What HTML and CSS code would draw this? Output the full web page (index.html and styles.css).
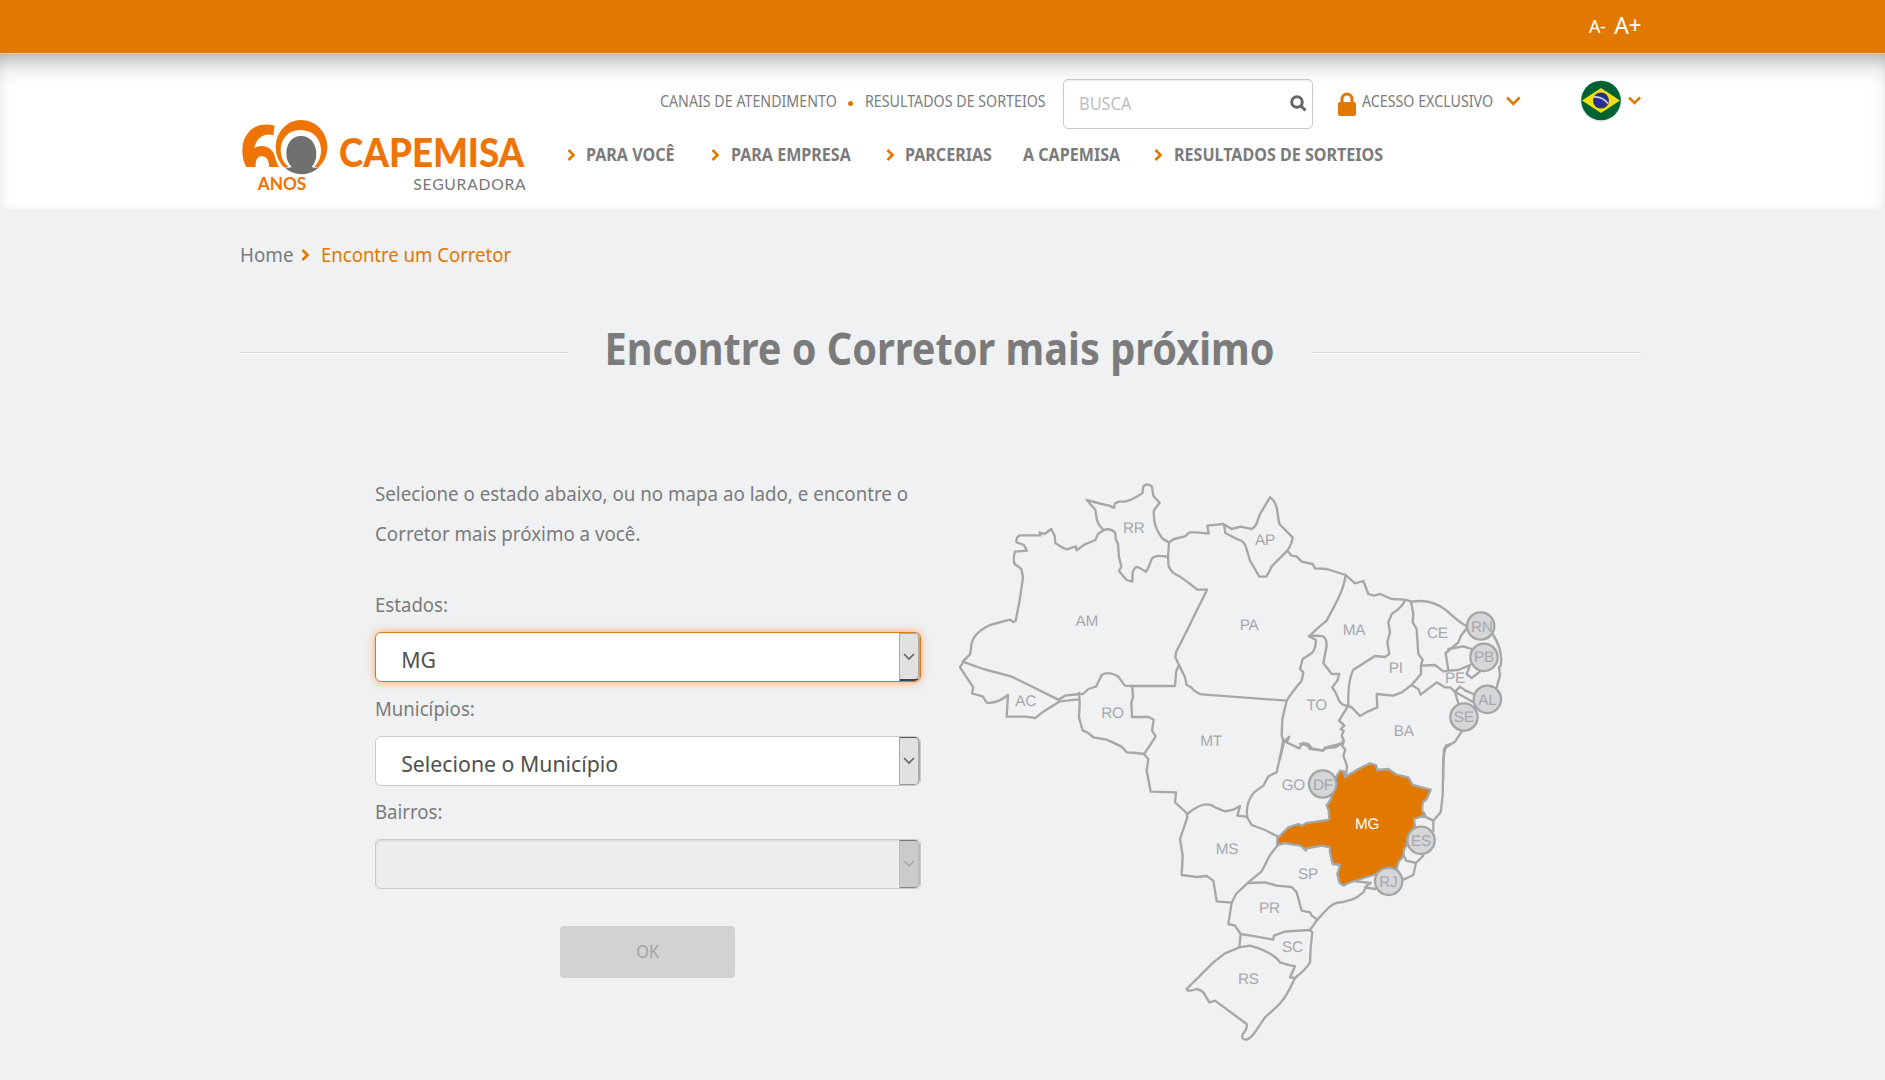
FILE: index.html
```html
<!DOCTYPE html>
<html lang="pt-BR">
<head>
<meta charset="utf-8">
<title>Encontre um Corretor</title>
<link rel="stylesheet" href="styles.css">
</head>
<body>
<div class="topbar"><div class="container font-size"><a class="small">A-</a><a class="large">A+</a></div></div>
<header class="header">
  <div class="container header-inner">
    <svg class="logo" viewBox="0 0 860 220" aria-label="Capemisa Seguradora 60 anos">
      <path class="o" d="M98 17 L94 46 Q73 39 58 50 Q41 60 37 84 Q55 73 77 82 Q96 91 101 119 L110 141 L82 141 Q80 108 59 108 Q40 109 40 141 L13 141 Q2 124 1 94 Q-1 57 25 31 Q53 6 98 17Z"/>
      <path class="o" d="M176 0 C218 0 256 33 256 82 Q256 118 230 141 L217 141 Q239 117 237 88 C235 52 210 31 177 30 C142 28 116 54 116 91 Q116 122 140 141 L124 141 Q101 115 101 82 C102 34 137 0 176 0Z"/>
      <path class="g" d="M177 48 C203 48 223 69 223 101 Q223 125 209 141 Q218 145 232 141 Q210 163 180 163 Q147 163 127 141 Q139 145 149 141 Q133 125 133 101 C133 69 151 48 177 48Z"/>
      <text class="brand" x="291" y="140" textLength="556" lengthAdjust="spacingAndGlyphs">CAPEMISA</text>
      <text class="years" x="47" y="210" textLength="146" lengthAdjust="spacingAndGlyphs">ANOS</text>
      <text class="seg" x="514" y="209" textLength="337" lengthAdjust="spacing">SEGURADORA</text>
    </svg>
    <div class="menus">
      <div class="utility">
        <a class="u1"><span>CANAIS DE ATENDIMENTO</span></a>
        <i class="dot"></i>
        <a class="u2"><span>RESULTADOS DE SORTEIOS</span></a>
        <div class="search"><span>BUSCA</span><svg width="17" height="17" viewBox="0 0 17 17"><circle cx="7" cy="7" r="5.3"/><path d="M11 11l4.5 4.5"/></svg></div>
        <svg class="lock" width="18" height="24" viewBox="0 0 18 24"><path d="M4 11V7a5 5 0 0 1 10 0v4" fill="none" stroke="#e17800" stroke-width="3"/><rect y="10" width="18" height="14" rx="2" fill="#e17800"/></svg>
        <a class="u3"><span>ACESSO EXCLUSIVO</span></a>
        <svg class="down" width="15" height="10" viewBox="0 0 15 10"><path d="M1 1.5l6.3 6.3 6.3-6.3"/></svg>
        <svg class="flag" width="42" height="42" viewBox="0 0 42 42"><circle cx="21" cy="21" r="20.8" fill="#e5efe9"/><circle cx="21" cy="20.5" r="19.8" fill="#006233"/><path d="M2 20.5L21 8l19 12.500L21 33z" fill="#f0df14"/><circle cx="21" cy="20.500" r="8" fill="#282e91"/><path d="M13.500 17q8-1 14.500 6.500" fill="none" stroke="#c9d2e6" stroke-width="1.600"/></svg>
        <svg class="down small-down" width="13" height="9" viewBox="0 0 13 9"><path d="M1 1.500l5.500 5.500 5.500-5.500"/></svg>
      </div>
      <nav class="nav">
        <svg class="chev" width="9" height="12" viewBox="0 0 9 12"><path d="M1.500 1l5 5-5 5"/></svg><a>PARA VOCÊ</a>
        <svg class="chev" width="9" height="12" viewBox="0 0 9 12"><path d="M1.500 1l5 5-5 5"/></svg><a>PARA EMPRESA</a>
        <svg class="chev" width="9" height="12" viewBox="0 0 9 12"><path d="M1.500 1l5 5-5 5"/></svg><a>PARCERIAS</a>
        <a>A CAPEMISA</a>
        <svg class="chev" width="9" height="12" viewBox="0 0 9 12"><path d="M1.500 1l5 5-5 5"/></svg><a>RESULTADOS DE SORTEIOS</a>
      </nav>
    </div>
  </div>
</header>
<main class="container">
  <div class="crumbs"><a class="home">Home</a><svg class="chev" width="9" height="12" viewBox="0 0 9 12"><path d="M1.500 1l5 5-5 5"/></svg><span class="here">Encontre um Corretor</span></div>
  <div class="heading"><i></i><h1>Encontre o Corretor mais próximo</h1><i></i></div>
  <div class="content">
    <form class="form">
      <p>Selecione o estado abaixo, ou no mapa ao lado, e encontre o<br>Corretor mais próximo a você.</p>
      <label>Estados:</label>
      <div class="select focus"><span>MG</span><b><svg width="12" height="8" viewBox="0 0 12 8"><path d="M1 1l5 5 5-5"/></svg></b></div>
      <label>Municípios:</label>
      <div class="select"><span>Selecione o Município</span><b><svg width="12" height="8" viewBox="0 0 12 8"><path d="M1 1l5 5 5-5"/></svg></b></div>
      <label>Bairros:</label>
      <div class="select disabled"><span></span><b><svg width="12" height="8" viewBox="0 0 12 8"><path d="M1 1l5 5 5-5"/></svg></b></div>
      <div class="ok"><span>OK</span></div>
    </form>
    <svg class="map" width="570" height="590" viewBox="0 0 1710 1770">
      <!-- northwest: RR, AM, AC, RO -->
      <g>
        <path d="M410 93L436 122L440 150Q446 172 462 183Q482 176 496 192L497 210L504 225L507 265L514 292L507 306L530 333L547 338L548 310Q555 290 565 295L588 308Q596 296 605 270Q615 255 654 264L657 220Q635 210 630 198Q608 165 612 123L629 101L610 80L606 53Q592 40 580 52L577 73L560 83L545 91L525 98L507 98L495 103L492 117L478 110L455 105Z"/>
        <path d="M462 183L444 195L436 213L405 226L392 235L380 244L378 232L350 241L336 235L316 222L314 200L304 180L284 195L268 190L272 199L210 199Q196 205 200 220L222 228L231 245L195 248Q188 270 194 285L214 300L219 325L208 400L197 455L190 459L180 452L120 468Q62 495 63 540L60 556L38 578L100 600L185 623L325 692L345 680L390 675L399 675L415 660L438 653L455 618Q475 605 505 623L524 650L545 651L675 651L679 605L687 588L676 565L678 550L718 470L771 362L742 362L718 343L690 323Q660 310 656 290L654 264"/>
        <path d="M38 582L30 595L70 655L66 673L98 682L110 701Q140 705 174 678L170 743L225 743L256 747L280 728L330 697L387 691M387 672L389 700L387 745L398 784L415 792L430 805L470 812L515 833L530 850L560 852L582 855L596 835L617 802L606 785L611 752L596 744L546 744L544 700L549 685L547 651"/>
      </g>
      <!-- north: AP, PA, TO -->
      <g transform="translate(630 0)">
        <path d="M27 220L42 210L75 202L88 190L110 190L146 194L142 170L190 165L215 180L242 173L275 180Q288 173 293 155L300 135L330 85Q350 97 353 135L358 165L398 205Q396 225 382 245L335 292Q325 315 318 323L298 323L270 275L258 235Q254 218 235 212L196 192L192 167"/>
        <path d="M382 245L395 260L410 262L425 278L458 285L465 298L500 300L557 318M57 588L75 625L80 648L93 655Q110 675 125 676L380 695L367 750L365 800L372 820L388 803L380 820L418 838L428 822L445 825L455 838L488 845L495 836L540 825L550 825M447 502L468 513Q467 550 448 557L428 570L420 600L430 610L425 635Q395 670 380 695M372 820L360 870"/>
      </g>
      <!-- northeast: MA, PI, CE, RN, PB, PE, AL, SE, BA -->
      <g transform="translate(1050 210)">
        <path d="M137 108C130 160 100 205 80 245L55 266L27 292L48 290L70 292Q80 300 80 320L70 372L95 405L118 405L112 425L97 445Q112 468 117 485Q128 502 145 500L117 545L133 560L122 570L131 575L125 590L132 605L126 620L136 632L130 650L141 680L138 710M0 615L20 618L30 630L70 635L75 628L105 625Q120 620 130 605"/>
        <path d="M137 108L165 133L190 126L205 165L222 170L240 165L275 180L315 182L335 188Q395 178 440 215Q475 248 500 262M315 182Q310 202 275 225L265 250L270 280L262 310L268 345L255 354L225 351L160 392Q143 425 145 500L155 505L180 531L205 517L232 505L230 465L280 470L305 460L335 438L363 405L363 380L368 362L355 345L350 270L338 250L340 225L333 188"/>
        <path d="M365 380L405 378L430 397L445 395L437 342L475 310L483 290L500 268M445 330L490 322L515 330M578 285Q610 335 602 380L597 385L600 410L590 445M445 395L475 393L510 378L500 405L515 417L540 398M335 438L355 450L362 467L410 430L435 445L450 445L465 458L480 443L497 455L520 465M465 458L520 490M465 460L475 492M487 575L465 608L438 625Q427 650 430 720"/>
      </g>
      <!-- centre, southeast and south -->
      <g transform="translate(540 810)">
        <path d="M42 45L55 60L50 95L62 158L138 160L135 190L170 222L172 235L150 300L158 350L155 408L200 414L230 411L250 425L260 487L305 491M172 225Q225 180 255 205L285 217L310 212L330 201L322 230L350 233L365 258L405 273L442 292M460 0L455 30L440 100L415 112L400 140L372 160Q345 195 352 233M442 320L420 348L395 397L355 430L318 465L305 491L295 555L315 560L332 585"/>
        <path d="M355 432L405 430L440 440L485 444L500 460L515 515L540 520L545 530L562 542L592 510Q615 488 635 490L665 482L680 475L700 460L710 440L722 432L662 425M705 445L735 450M820 422L850 408L858 372L880 350M858 372L828 365L822 350M910 275L910 245L932 220L938 170L940 70L942 30L948 20L960 15M850 240L870 232L890 235L910 245"/>
        <path d="M332 585L380 593L430 602L432 590L465 578L490 576L540 573L562 542M540 573L547 580L542 625L540 670Q530 690 495 717L480 715L495 682L465 675L450 670Q430 640 360 620L328 625L332 585M328 625L285 643L250 670L170 750Q172 760 200 750Q220 755 225 768L238 790L255 785L350 855Q353 870 338 885Q332 903 350 902Q367 895 380 872L405 835L435 808Q465 785 495 717"/>
        <path class="selected" d="M442 318L442 298L475 265L505 255L515 260L530 252L560 248L598 242L596 212L590 200L603 180L606 150L618 115L630 95L642 98L645 115L685 90L720 73L738 78L742 93L775 90L800 107L835 115L848 138L902 152L890 180L878 190L876 215L886 228L852 240L855 262L832 300L830 320L822 330L820 352L805 370L800 390L740 405L655 432L640 440L628 430L622 405L630 378L608 375L600 340L600 325L575 320L530 328L528 335L512 320L490 317L465 312Z"/>
      </g>
      <g class="pins"><circle cx="1592" cy="471" r="41"/><circle cx="1602" cy="565" r="41"/><circle cx="1612" cy="691" r="41"/><circle cx="1542" cy="744" r="41"/><circle cx="1118" cy="945" r="41"/><circle cx="1413" cy="1114" r="41"/><circle cx="1316" cy="1237" r="41"/></g>
      <g class="names">
        <text x="551" y="192">RR</text><text x="945" y="229">AP</text><text x="410" y="472">AM</text><text x="897" y="484">PA</text><text x="1212" y="498">MA</text><text x="1462" y="507">CE</text><text x="1595" y="488">RN</text><text x="1602" y="579">PB</text><text x="1337" y="612">PI</text><text x="1515" y="641">PE</text><text x="1612" y="709">AL</text><text x="1541" y="759">SE</text><text x="227" y="712">AC</text><text x="487" y="748">RO</text><text x="783" y="832">MT</text><text x="1100" y="723">TO</text><text x="1361" y="801">BA</text><text x="1030" y="963">GO</text><text x="1119" y="963">DF</text><text x="831" y="1156">MS</text><text class="on" x="1251" y="1080">MG</text><text x="1413" y="1130">ES</text><text x="1074" y="1230">SP</text><text x="1315" y="1254">RJ</text><text x="958" y="1332">PR</text><text x="1027" y="1450">SC</text><text x="895" y="1546">RS</text>
      </g>
    </svg>
  </div>
</main>
</body>
</html>
```
FILE: styles.css
```css
* { box-sizing: border-box; }
body { margin: 0; height: 1080px; overflow: hidden; background: #eff1f3; color: #7b7b7b; font: 20px/1.36 "Noto Sans", sans-serif; }
.container { width: 1401px; margin-left: 240px; }
.topbar { height: 54px; background: #e17800; border-bottom: 1px solid #eec797; color: #fff; }
.font-size { display: flex; align-items: center; gap: 9px; padding-left: 1349px; height: 52px; }
.font-size a { white-space: nowrap; }
.font-size .small { width: 17px; font-size: 18px; letter-spacing: -.5px; }
.font-size .large { width: 28px; font-size: 23px; letter-spacing: -.5px; }
.header { height: 155px; background: #fff; box-shadow: inset 0 20px 26px -16px rgba(60, 60, 70, .5), inset 0 0 8px rgba(60, 60, 75, .05); }
.header-inner { display: flex; }
.logo { width: 286.67px; height: 73.33px; margin: 66px 0 0 2px; overflow: visible; flex: none; }
.o, .brand, .years { fill: #ef7404; }
.g { fill: #70706e; }
.brand { font: 900 122px Lato, sans-serif; }
.years { font: 700 51px Lato, sans-serif; }
.seg { font: 400 47px Lato, sans-serif; fill: #777; }
.menus { padding: 25px 0 0 38.3px; }
.utility { display: flex; align-items: center; height: 50px; padding-left: 93px; font-size: 16px; }
.utility a { height: 27px; line-height: 21px; white-space: nowrap; flex: none; }
.utility a span { display: inline-block; transform: scaleX(.89); transform-origin: left; }
.u1 { width: 188px; }
.u2 { width: 198px; }
.u3 { width: 144px; }
.dot { width: 5px; height: 5px; margin-bottom: 1px; border-radius: 50%; background: #e17800; }
.utility .u2 { margin-left: 12px; }
.search { display: flex; align-items: center; justify-content: space-between; width: 250px; height: 50px; padding: 0 5px 2px 15px; border: 1px solid #c9c9c9; border-radius: 5px; background: #fff; box-shadow: inset 0 1px 1px rgba(0, 0, 0, .07); color: #bfbfbf; font-size: 18px; flex: none; }
.search span { transform: scaleX(.91); transform-origin: left; }
.search svg { fill: none; stroke: #666; stroke-width: 3; }
.lock { margin: 0 6px 1px 25px; flex: none; }
.down, .chev { fill: none; stroke: #e17800; stroke-width: 2.6; flex: none; }
.down { margin-bottom: 6px; }
.flag { margin: 0 6px 6px 59px; flex: none; }
.small-down { margin-bottom: 8px; }
.nav { display: grid; grid-template-columns: 19px 125px 20px 155px 19px 118px 131px 20px 211px; align-items: center; height: 27px; margin-top: 12px; font-size: 18px; font-weight: 700; }
.nav a { white-space: nowrap; transform: scaleX(.893); transform-origin: left; }
.crumbs { display: flex; align-items: center; height: 30px; margin-top: 31px; }
.crumbs .home { width: 61px; transform: scaleX(.94); transform-origin: left; }
.crumbs .here { margin-left: 11px; color: #e17800; transform: scaleX(.927); transform-origin: left; }
.heading { display: grid; grid-template-columns: 327px 1fr 329px; align-items: center; height: 70px; margin-top: 43px; }
.heading i { height: 2px; margin-top: 9px; border-top: 1px solid #d5d6d8; background: #fff; }
h1 { margin: 0; font-size: 44px; line-height: 60px; white-space: nowrap; justify-self: center; transform: scaleX(.902); }
.content { display: flex; padding: 91px 0 0 135px; }
.form { width: 546px; }
p { width: 600px; height: 96px; margin: 0 0 21px; line-height: 40px; transform: scaleX(.937); transform-origin: left; }
label { display: block; height: 28px; line-height: 28px; transform: scaleX(.93); transform-origin: left; }
.select { display: flex; justify-content: space-between; height: 50px; margin: 13px 0 12.500px; overflow: hidden; border: 1px solid #c8cacc; border-radius: 6px; background: #fff; color: #505050; font-size: 22px; line-height: 53px; }
.select span { padding-left: 26px; transform: scaleX(.967); transform-origin: left; }
.select b { display: flex; align-items: center; justify-content: center; width: 21px; background: #e1e1e1; border: 1px solid #aaa; border-top-color: #555; border-bottom-color: #999; border-right-width: 2px; border-radius: 0 5px 5px 0; }
.select svg { fill: none; stroke: #666; stroke-width: 1.700; }
.focus { border-color: #d97824; box-shadow: 0 0 9px rgba(255, 120, 20, .65); }
.focus b { border-top-color: #aaa; border-bottom: 2px solid #444; }
.disabled { background: #eee; box-shadow: inset 0 1px 2px rgba(0, 0, 0, .1); }
.disabled b { background: #cbcbcb; border-color: #777 #bbb #888; }
.disabled svg { stroke: #aaa; }
.ok { width: 175px; height: 52px; margin: 37px 0 0 185px; border-radius: 4px; background: #d2d2d2; color: #a3a3a3; font-size: 18px; line-height: 51px; text-align: center; }
.ok span { display: inline-block; transform: scaleX(.9); }
.map { margin: -5px 0 0 29px; flex: none; }
.map path { fill: none; stroke: #a5a7a9; stroke-width: 7; stroke-linejoin: round; stroke-linecap: round; }
.map .selected { fill: #e17800; }
.pins circle { fill: #d5d6d8; stroke: #a3a5a7; stroke-width: 7; }
.names { fill: #a7a8aa; font: 46px "Liberation Sans", sans-serif; text-anchor: middle; text-rendering: geometricPrecision; letter-spacing: -1px; }
.names .on { fill: #fff; }
```
